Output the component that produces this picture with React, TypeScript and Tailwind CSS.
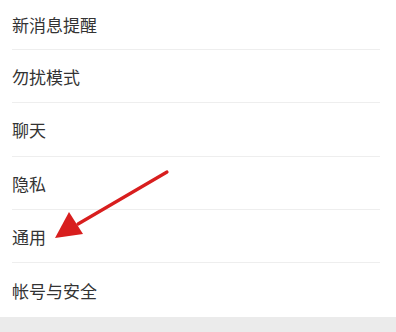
const items = [
  { label: '新消息提醒', h: 'h-[50px]' },
  { label: '勿扰模式', h: 'h-[53px]' },
  { label: '聊天', h: 'h-[54px]' },
  { label: '隐私', h: 'h-[53px]' },
  { label: '通用', h: 'h-[53px]' },
  { label: '帐号与安全', h: 'h-[54px]', last: true },
]

export default function App() {
  return (
    <div
      className="relative w-[396px] h-[332px] overflow-hidden bg-[#ebebeb]"
      style={{ fontFamily: '"Noto Sans CJK SC", "Noto Sans", sans-serif' }}
    >
      <div className="bg-white">
        {items.map((item) => (
          <div key={item.label} className={`${item.h} flex flex-col pl-3 pr-4`}>
            <div className="flex flex-1 items-center text-[17px] text-[#333333] pt-px">
              {item.label}
            </div>
            {!item.last && <div className="h-px bg-[#eeeeee]" />}
          </div>
        ))}
      </div>

      {/* red arrow annotation */}
      <svg className="absolute left-0 top-0" width="396" height="332" viewBox="0 0 396 332">
        <line x1="167" y1="172" x2="78" y2="224" stroke="#d81e1e" strokeWidth="3.2" strokeLinecap="round" />
        <polygon points="55,238 69,212 83,234" fill="#d81e1e" />
      </svg>
    </div>
  )
}
